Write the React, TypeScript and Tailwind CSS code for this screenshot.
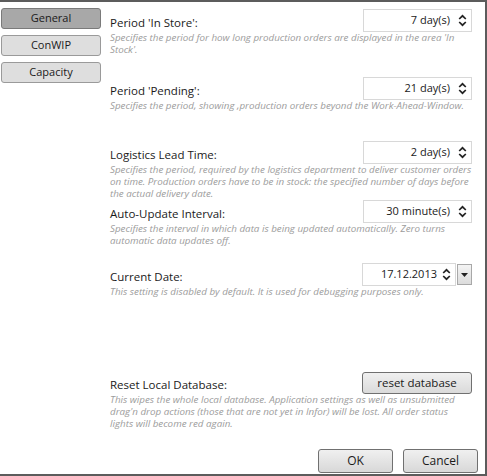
import React from "react";

const font = { fontFamily: '"Open Sans", "Noto Sans", sans-serif' };

function Spinner() {
  return (
    <svg width="9" height="13" viewBox="0 0 9 13" className="shrink-0">
      <path d="M1.2 5 L4.5 1.8 L7.8 5" fill="none" stroke="#222" strokeWidth="1.7" />
      <path d="M1.2 8 L4.5 11.2 L7.8 8" fill="none" stroke="#222" strokeWidth="1.7" />
    </svg>
  );
}

function NumberBox({ value }: { value: string }) {
  return (
    <div className="w-[109px] h-[23px] border border-[#d8d8d8] bg-white flex items-center justify-end gap-[8px] pr-[4px] text-[11px] text-[#1a1a1a]">
      <span>{value}</span>
      <Spinner />
    </div>
  );
}

function DateBox() {
  return (
    <div className="flex items-center gap-[1px]">
      <div className="w-[94px] h-[23px] border border-[#d8d8d8] bg-white flex items-center justify-end gap-[5px] pr-[4px] text-[11px] text-[#1a1a1a]">
        <span>17.12.2013</span>
        <Spinner />
      </div>
      <div className="w-[15px] h-[21px] border border-[#a8a8a8] bg-gradient-to-b from-[#f4f4f4] to-[#dcdcdc] flex items-center justify-center">
        <svg width="7" height="4" viewBox="0 0 7 4">
          <path d="M0 0 L7 0 L3.5 4 Z" fill="#222" />
        </svg>
      </div>
    </div>
  );
}

function Row({
  label,
  control,
  lines,
  className,
}: {
  label: string;
  control: React.ReactNode;
  lines: string[];
  className?: string;
}) {
  return (
    <div className={className}>
      <div className="h-[23px] flex items-end justify-between">
        <span className="text-[11.5px] leading-[16px] pb-[1px] text-[#1a1a1a]">{label}</span>
        {control}
      </div>
      <div className="text-[9.8px] italic leading-[12px] text-[#9c9c9c]">
        {lines.map((l) => (
          <div key={l} className="whitespace-nowrap">
            {l}
          </div>
        ))}
      </div>
    </div>
  );
}

function SideButton({ label, active }: { label: string; active?: boolean }) {
  return (
    <button
      className={
        "h-[21px] w-full rounded-[3px] border text-[11px] text-[#1a1a1a] " +
        (active ? "bg-[#a8a8a8] border-[#7a7a7a]" : "bg-[#dedede] border-[#9a9a9a]")
      }
    >
      {label}
    </button>
  );
}

export default function App() {
  return (
    <div
      style={font}
      className="w-[487px] h-[476px] bg-white border-t-2 border-r-2 border-b-2 border-[#5c5c5c] flex"
    >
      {/* sidebar */}
      <div className="w-[101px] pl-[1px] pt-[6px] flex flex-col gap-[6px]">
        <SideButton label="General" active />
        <SideButton label="ConWIP" />
        <SideButton label="Capacity" />
      </div>

      {/* settings */}
      <div className="flex-1 pl-[9px] pr-[13px] pt-[7px] flex flex-col">
        <Row
          label="Period 'In Store':"
          control={<NumberBox value="7 day(s)" />}
          lines={[
            "Specifies the period for how long production orders are displayed in the area 'In",
            "Stock'.",
          ]}
        />
        <Row
          className="mt-[21px]"
          label="Period 'Pending':"
          control={<NumberBox value="21 day(s)" />}
          lines={["Specifies the period, showing ,production orders beyond the Work-Ahead-Window."]}
        />
        <Row
          className="mt-[29px]"
          label="Logistics Lead Time:"
          control={<NumberBox value="2 day(s)" />}
          lines={[
            "Specifies the period, required by the logistics department to deliver customer orders",
            "on time. Production orders have to be in stock: the specified number of days before",
            "the actual delivery date.",
          ]}
        />
        <Row
          label="Auto-Update Interval:"
          control={<NumberBox value="30 minute(s)" />}
          lines={[
            "Specifies the interval in which data is being updated automatically. Zero turns",
            "automatic data updates off.",
          ]}
        />
        <Row
          className="mt-[16px]"
          label="Current Date:"
          control={<DateBox />}
          lines={["This setting is disabled by default. It is used for debugging purposes only."]}
        />
        <Row
          className="mt-[73px]"
          label="Reset Local Database:"
          control={
            <button className="w-[110px] h-[22px] rounded-[3px] border border-[#707070] bg-gradient-to-b from-[#f0f0f0] to-[#dadada] text-[11.5px] text-[#1a1a1a]">
              reset database
            </button>
          }
          lines={[
            "This wipes the whole local database. Application settings as well as unsubmitted",
            "drag'n drop actions (those that are not yet in Infor) will be lost. All order status",
            "lights will become red again.",
          ]}
        />
        <div className="mt-[19px] -mr-[6px] flex justify-end gap-[10px]">
          <button className="w-[75px] h-[24px] rounded-[3px] border border-[#707070] bg-gradient-to-b from-[#f0f0f0] to-[#d8d8d8] text-[12px] text-[#1a1a1a]">
            OK
          </button>
          <button className="w-[75px] h-[24px] rounded-[3px] border border-[#707070] bg-gradient-to-b from-[#f0f0f0] to-[#d8d8d8] text-[12px] text-[#1a1a1a]">
            Cancel
          </button>
        </div>
      </div>
    </div>
  );
}
